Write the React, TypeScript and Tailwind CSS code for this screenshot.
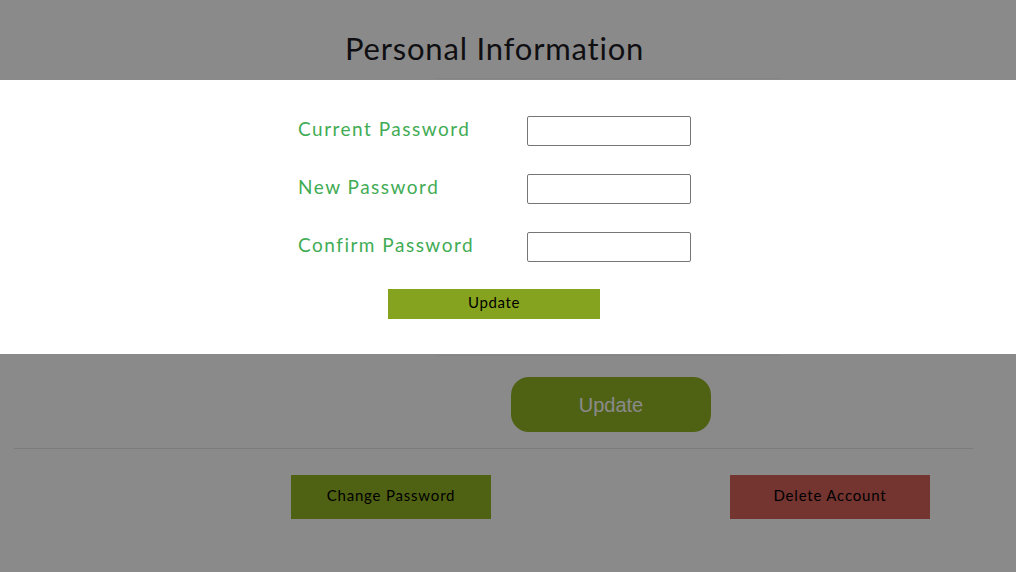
import React from 'react';

const font = { fontFamily: 'Lato, "Open Sans", sans-serif' };

const fields = ['Current Password', 'New Password', 'Confirm Password'];

const App: React.FC = () => {
  return (
    <div className="relative w-full h-[572px] bg-white overflow-hidden" style={font}>
      {/* page behind the modal */}
      <div className="flex flex-col">
        <h1 className="pt-[28px] pl-[345px] text-[31px] leading-[40px] tracking-[0.8px] text-[#1c1c24]">
          Personal Information
        </h1>
        <div className="mt-[10px] ml-[437px] w-[343px] h-[278px] border-y border-[#f3f3f3]" />
        <div className="mt-[21px] pl-[511px]">
          <button className="w-[200px] h-[55px] rounded-[18px] bg-[#92b324] text-white text-[20px]" style={{ fontFamily: '"Liberation Sans", Arial, sans-serif' }}>
            Update
          </button>
        </div>
        <div className="mt-[16px] mx-[14px] w-[959px] border-t border-[#e6e6e6]" />
        <div className="mt-[26px] flex">
          <button className="ml-[291px] w-[200px] h-[44px] pb-[4px] bg-[#92b324] text-black text-[15px] tracking-[0.8px]">
            Change Password
          </button>
          <button className="ml-[239px] w-[200px] h-[44px] pb-[4px] bg-[#d6615a] text-black text-[15px] tracking-[0.8px]">
            Delete Account
          </button>
        </div>
      </div>

      {/* dim overlay */}
      <div className="absolute inset-0 bg-black/[0.46]" />

      {/* modal */}
      <div className="absolute inset-x-0 top-[80px] h-[274px] bg-white">
        <div className="pt-[36px] pl-[298px] flex flex-col gap-[28px]">
          {fields.map((f) => (
            <div key={f} className="flex items-center h-[30px]">
              <label className="w-[229px] -mt-[4px] text-[19px] tracking-[1.5px] text-[#42ac55]">{f}</label>
              <input type="password" className="w-[164px] h-[30px] border border-[#767676] rounded-[2px] bg-white outline-none" />
            </div>
          ))}
        </div>
        <div className="mt-[27px] pl-[388px]">
          <button className="w-[212px] h-[30px] pb-[3px] bg-[#86a31f] text-black text-[15px] tracking-[0.6px]">
            Update
          </button>
        </div>
      </div>
    </div>
  );
};

export default App;
